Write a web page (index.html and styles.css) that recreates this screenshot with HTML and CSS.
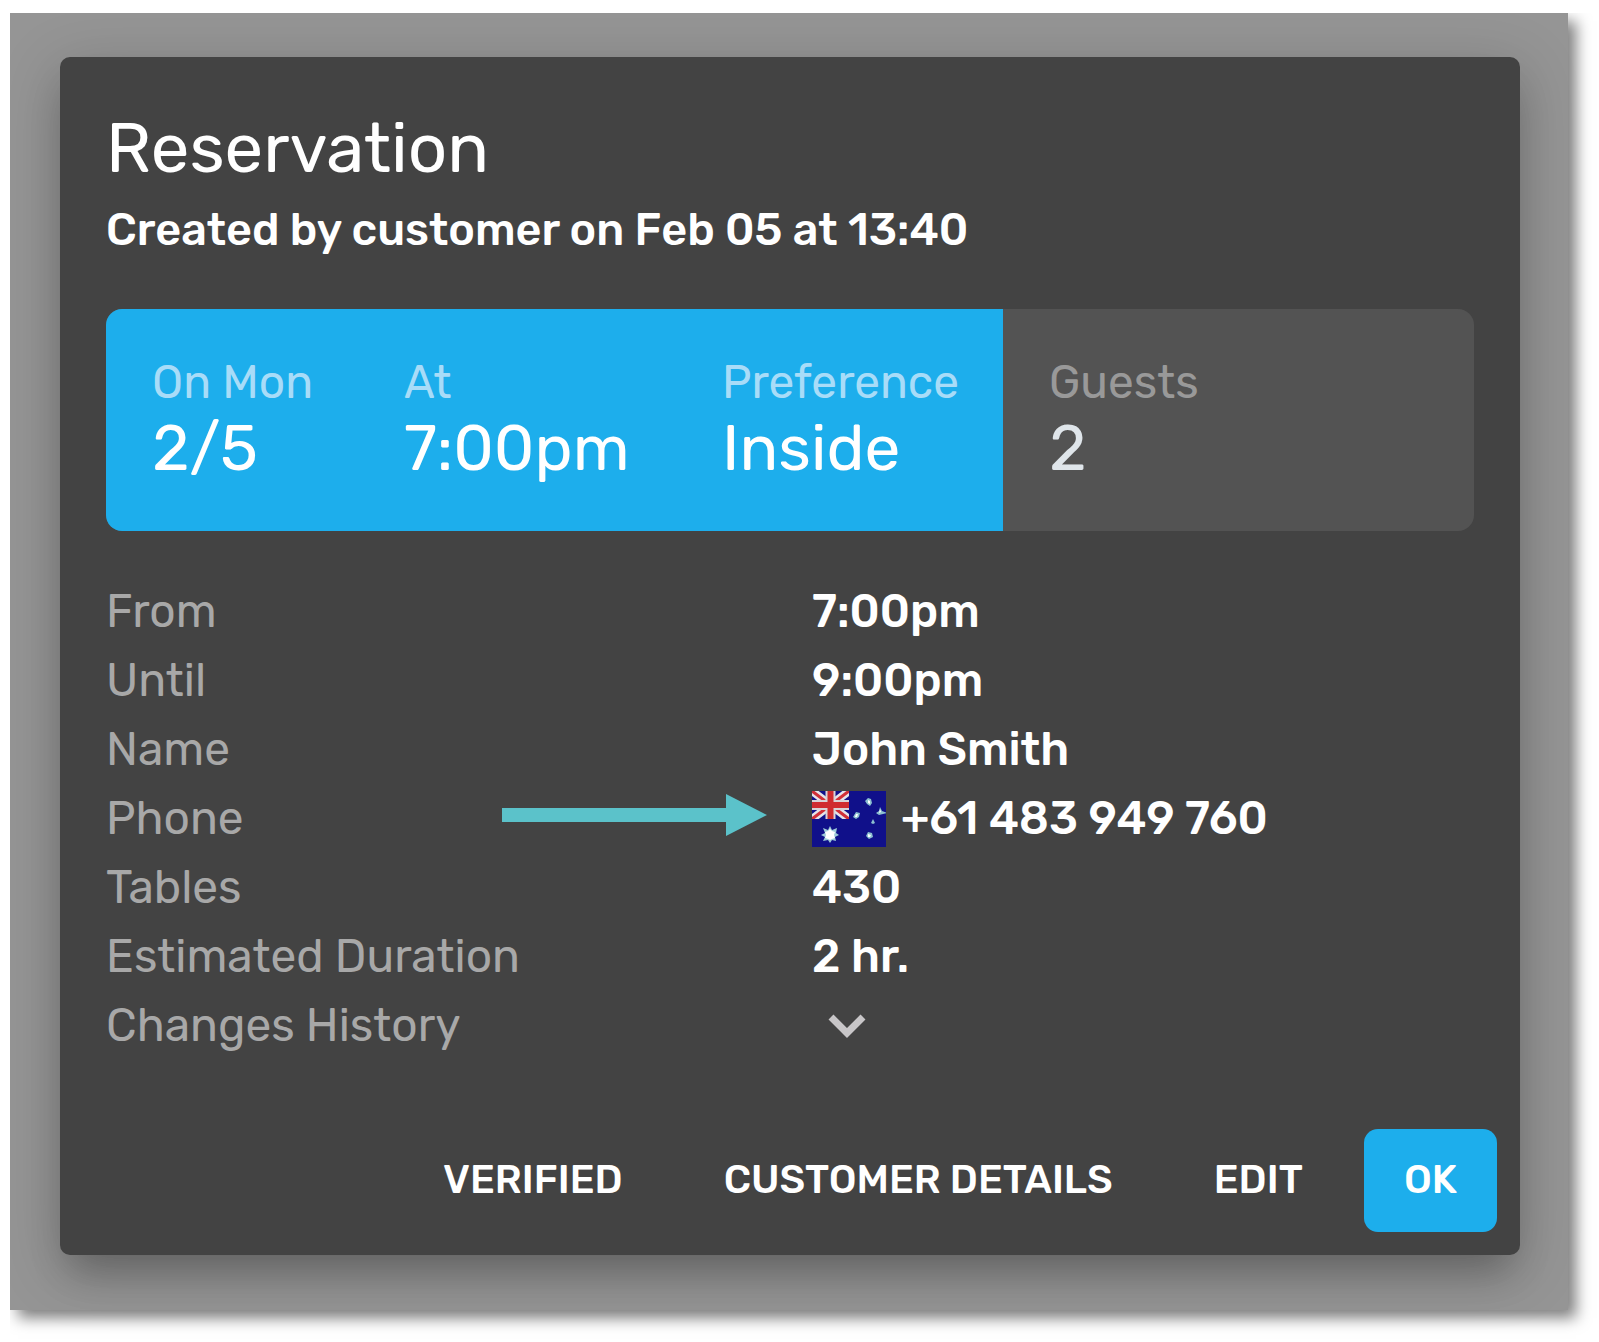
FILE: index.html
```html
<!DOCTYPE html>
<html lang="en">
<head>
<meta charset="utf-8">
<meta name="viewport" content="width=device-width, initial-scale=1">
<title>Reservation</title>
<link rel="stylesheet" href="styles.css">
</head>
<body>
<main class="backdrop">
  <section class="dialog" role="dialog" aria-labelledby="dialog-title">
    <div class="content">
      <h1 class="title" id="dialog-title">Reservation</h1>
      <p class="subtitle">Created by customer on Feb 05 at 13:40</p>

      <dl class="summary">
        <div class="cell cell-active"><dt>On Mon</dt><dd>2/5</dd></div>
        <div class="cell cell-active"><dt>At</dt><dd>7:00pm</dd></div>
        <div class="cell cell-active"><dt>Preference</dt><dd>Inside</dd></div>
        <div class="cell"><dt>Guests</dt><dd>2</dd></div>
      </dl>

      <dl class="details">
        <div class="row"><dt>From</dt><dd>7:00pm</dd></div>
        <div class="row"><dt>Until</dt><dd>9:00pm</dd></div>
        <div class="row"><dt>Name</dt><dd>John Smith</dd></div>
        <div class="row">
          <dt>Phone</dt>
          <dd class="phone">
            <svg class="pointer" viewBox="0 0 265 42" aria-hidden="true">
              <path d="M0 14h224V0l41 21-41 21V28H0z" fill="#5bc2ca"/>
            </svg>
            <svg class="flag" viewBox="0 0 74 56" role="img" aria-label="Australia">
              <path d="M0 0h74v56H0z" fill="#10108a"/>
              <path d="M0 0l37 28M37 0L0 28" stroke="#e4e4ea" stroke-width="8"/>
              <path d="M0 0l37 28M37 0L0 28" stroke="#d03038" stroke-width="3"/>
              <path d="M18.500 0v28M0 14h37" stroke="#d8d4d8" stroke-width="10"/>
              <path d="M18.500 0v28M0 14h37" stroke="#d02c30" stroke-width="6"/>
              <path d="M0 28h37v6H0zM37 0h6v28h-6z" fill="#10108a"/>
              <path d="M18 35l2 4 5-2-1 5 3 2-4 2 1 4-4-1-2 3-2-3-5 1 2-4-4-2 4-2-2-5 5 2z" fill="#9fcbd8"/>
              <path d="M18 38l2 2 3 1-1 3 1 3-3 1-2 1-2-1-3-1 1-3-1-3 3-1z" fill="#fff"/>
              <path d="M56 7l3 1 1 4-2 3-3-2-2-3zM68 16l2 4 5 2-4 1-4 1-3-2 3-2zM44 21l4 1-1 4-3 2-3-2zM61 28l2 4-2 1-2-1zM56 41l4 1 1 4-4 2-3-3z" fill="#8cc0d0"/>
              <path d="M56 9l2 1v3l-2-1zM68 18l1 3-2 1zM44 23h2l-1 3h-2zM56 43l3 1-1 2h-2z" fill="#fff"/>
            </svg>
            <span>+61 483 949 760</span>
          </dd>
        </div>
        <div class="row"><dt>Tables</dt><dd>430</dd></div>
        <div class="row"><dt>Estimated Duration</dt><dd>2 hr.</dd></div>
        <div class="row">
          <dt>Changes History</dt>
          <dd>
            <button class="expand" type="button" aria-label="Show changes history">
              <svg viewBox="0 0 38 24" aria-hidden="true"><path d="M3 3l16 16L35 3" fill="none" stroke="#c8c6c8" stroke-width="7"/></svg>
            </button>
          </dd>
        </div>
      </dl>
    </div>

    <footer class="actions">
      <button class="action" type="button">VERIFIED</button>
      <button class="action" type="button">CUSTOMER DETAILS</button>
      <button class="action" type="button">EDIT</button>
      <button class="action action-primary" type="button">OK</button>
    </footer>
  </section>
</main>
</body>
</html>
```
FILE: styles.css
```css
* {
  box-sizing: border-box;
}

body {
  margin: 0;
  padding: 13px 31px 32px 10px;
  background: #fff;
  color: #fff;
  font-family: Rubik, Roboto, sans-serif;
  font-size: 46px;
}

h1, p, dl, dt, dd {
  margin: 0;
}

.backdrop {
  padding: 44px 48px 55px 50px;
  background: #959595;
  box-shadow: 8px 8px 14px rgba(0, 0, 0, 0.5);
  clip-path: inset(0 -31px -32px 0);
}

.dialog {
  padding: 51px 23px 23px;
  border-radius: 10px;
  background: #434343;
  box-shadow: 0 26px 36px -10px rgba(0, 0, 0, 0.22), 0 14px 60px 4px rgba(0, 0, 0, 0.18);
}

.content {
  padding: 0 23px;
}

.title {
  font-size: 69px;
  font-weight: 400;
  line-height: 80px;
}

.subtitle {
  font-size: 45px;
  font-weight: 500;
  line-height: 84px;
}

.summary {
  display: grid;
  grid-template-columns: 252fr 318fr 327fr 471fr;
  margin-top: 37px;
  overflow: hidden;
  border-radius: 16px;
  background: #535353;
}

.cell {
  padding: 46px;
  padding-right: 0;
}

.cell dt {
  color: #999;
  line-height: 56px;
}

.cell dd {
  color: #dfe5ea;
  font-size: 64px;
  line-height: 74px;
}

.cell-active {
  background: #1daeec;
}

.cell-active dt {
  color: #a8dcf8;
}

.cell-active dd {
  color: #fff;
}

.details {
  margin-top: 46px;
}

.row {
  display: grid;
  grid-template-columns: 706fr 662fr;
  line-height: 69px;
}

.row dt {
  color: #a8a8a8;
}

.row dd {
  font-weight: 500;
}

.phone {
  position: relative;
  display: flex;
  align-items: center;
  gap: 15px;
}

.flag {
  width: 74px;
  height: 56px;
}

.pointer {
  position: absolute;
  top: 10px;
  right: 100%;
  width: 265px;
  height: 42px;
  margin-right: 45px;
}

button {
  border: 0;
  background: none;
  color: inherit;
  font: inherit;
}

.expand {
  display: flex;
  align-items: center;
  height: 69px;
  padding: 0 16px;
}

.expand svg {
  width: 38px;
  height: 24px;
}

.actions {
  display: flex;
  justify-content: flex-end;
  gap: 21px;
  margin-top: 69px;
}

.action {
  height: 103px;
  padding: 0 40px 2px;
  border-radius: 14px;
  font-size: 40px;
  font-weight: 500;
}

.action-primary {
  background: #1daeec;
}
```
